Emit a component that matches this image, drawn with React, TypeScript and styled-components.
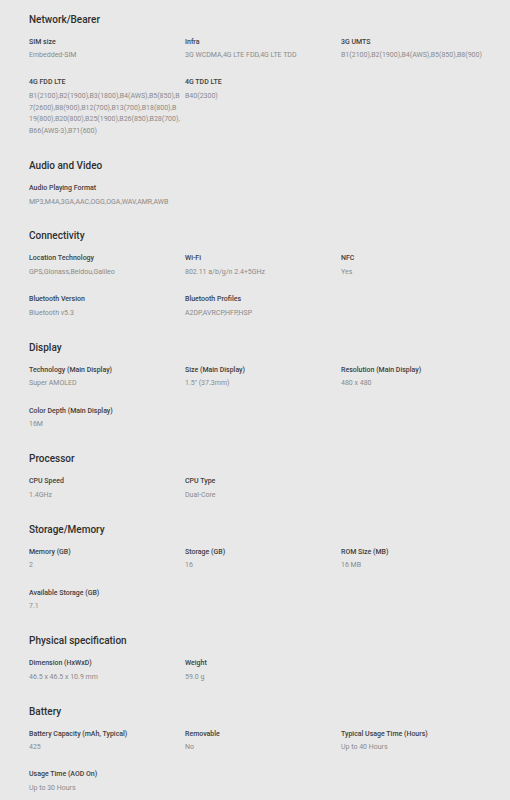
import React, { FC } from 'react';
import styled, { createGlobalStyle } from 'styled-components';

const GlobalStyle = createGlobalStyle`
  html, body {
    margin: 0;
    padding: 0;
    background: #e8e8e8;
  }
  body {
    font-family: Roboto, "Liberation Sans", sans-serif;
  }
`;

const Page = styled.div`
  width: 510px;
  min-height: 800px;
  box-sizing: border-box;
  padding: 12.5px 13px 0 29px;
  background: #e8e8e8;
`;

const Section = styled.section`
  margin-bottom: 21.2px;
`;

const Heading = styled.h3`
  margin: 0 0 10px;
  font-size: 10px;
  line-height: 14px;
  font-weight: 500;
  color: #2e2e2e;
`;

const Grid = styled.div`
  display: grid;
  grid-template-columns: repeat(3, 156px);
  row-gap: 15.6px;
`;

const Item = styled.div`
  padding-right: 5px;
`;

const Label = styled.div`
  font-size: 7px;
  line-height: 10px;
  font-weight: 500;
  color: #404040;
  margin-bottom: 3.6px;
`;

const Value = styled.div`
  font-size: 7px;
  line-height: 11.7px;
  color: #8a8a8a;
  word-break: break-all;
`;

type Spec = { label: string; value: string };
type Group = { title: string; specs: Spec[] };

const groups: Group[] = [
  {
    title: 'Network/Bearer',
    specs: [
      { label: 'SIM size', value: 'Embedded-SIM' },
      { label: 'Infra', value: '3G WCDMA,4G LTE FDD,4G LTE TDD' },
      { label: '3G UMTS', value: 'B1(2100),B2(1900),B4(AWS),B5(850),B8(900)' },
      {
        label: '4G FDD LTE',
        value:
          'B1(2100),B2(1900),B3(1800),B4(AWS),B5(850),B7(2600),B8(900),B12(700),B13(700),B18(800),B19(800),B20(800),B25(1900),B26(850),B28(700),B66(AWS-3),B71(600)',
      },
      { label: '4G TDD LTE', value: 'B40(2300)' },
    ],
  },
  {
    title: 'Audio and Video',
    specs: [{ label: 'Audio Playing Format', value: 'MP3,M4A,3GA,AAC,OGG,OGA,WAV,AMR,AWB' }],
  },
  {
    title: 'Connectivity',
    specs: [
      { label: 'Location Technology', value: 'GPS,Glonass,Beidou,Galileo' },
      { label: 'Wi-Fi', value: '802.11 a/b/g/n 2.4+5GHz' },
      { label: 'NFC', value: 'Yes' },
      { label: 'Bluetooth Version', value: 'Bluetooth v5.3' },
      { label: 'Bluetooth Profiles', value: 'A2DP,AVRCP,HFP,HSP' },
    ],
  },
  {
    title: 'Display',
    specs: [
      { label: 'Technology (Main Display)', value: 'Super AMOLED' },
      { label: 'Size (Main Display)', value: '1.5" (37.3mm)' },
      { label: 'Resolution (Main Display)', value: '480 x 480' },
      { label: 'Color Depth (Main Display)', value: '16M' },
    ],
  },
  {
    title: 'Processor',
    specs: [
      { label: 'CPU Speed', value: '1.4GHz' },
      { label: 'CPU Type', value: 'Dual-Core' },
    ],
  },
  {
    title: 'Storage/Memory',
    specs: [
      { label: 'Memory (GB)', value: '2' },
      { label: 'Storage (GB)', value: '16' },
      { label: 'ROM Size (MB)', value: '16 MB' },
      { label: 'Available Storage (GB)', value: '7.1' },
    ],
  },
  {
    title: 'Physical specification',
    specs: [
      { label: 'Dimension (HxWxD)', value: '46.5 x 46.5 x 10.9 mm' },
      { label: 'Weight', value: '59.0 g' },
    ],
  },
  {
    title: 'Battery',
    specs: [
      { label: 'Battery Capacity (mAh, Typical)', value: '425' },
      { label: 'Removable', value: 'No' },
      { label: 'Typical Usage Time (Hours)', value: 'Up to 40 Hours' },
      { label: 'Usage Time (AOD On)', value: 'Up to 30 Hours' },
    ],
  },
];

const App: FC = () => {
  return (
    <>
      <GlobalStyle />
      <Page>
        {groups.map((group) => (
          <Section key={group.title}>
            <Heading>{group.title}</Heading>
            <Grid>
              {group.specs.map((spec) => (
                <Item key={spec.label}>
                  <Label>{spec.label}</Label>
                  <Value>{spec.value}</Value>
                </Item>
              ))}
            </Grid>
          </Section>
        ))}
      </Page>
    </>
  );
};

export default App;
